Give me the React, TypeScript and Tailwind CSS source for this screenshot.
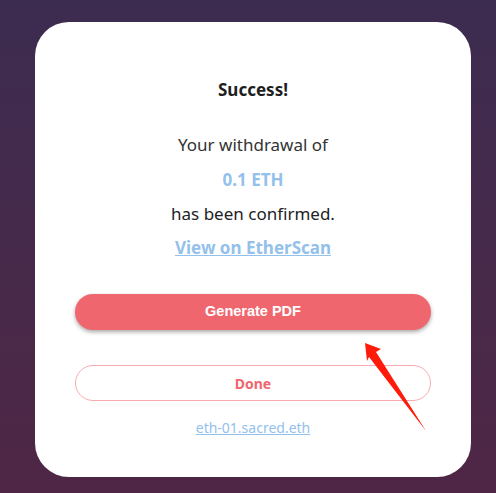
import React from "react";

const font = { fontFamily: '"Noto Sans", "Open Sans", sans-serif' };

export default function App() {
  return (
    <div
      className="relative w-[496px] h-[493px] overflow-hidden bg-gradient-to-b from-[#3c2c50] to-[#4f2645] pt-[22px] pl-[35px]"
      style={font}
    >
      <div className="w-[436px] h-[455px] bg-white rounded-[34px] flex flex-col items-center px-[40px] pt-[57px]">
        <h2 className="text-[17px] leading-[22px] font-bold text-[#1e1e1e]">Success!</h2>
        <p className="mt-[32px] text-[17px] leading-[24px] text-[#333]">Your withdrawal of</p>
        <p className="mt-[11px] text-[17px] leading-[24px] font-bold text-[#93c1ec]">0.1 ETH</p>
        <p className="mt-[10px] text-[17px] leading-[24px] text-[#222]">has been confirmed.</p>
        <a className="mt-[10px] text-[17px] leading-[24px] font-bold text-[#93c1ec] underline">
          View on EtherScan
        </a>
        <button
          className="mt-[34px] w-[356px] h-[36px] rounded-full bg-[#f0666e] text-white text-[14.5px] font-bold shadow-[0_2px_4px_rgba(0,0,0,0.35)]"
          style={{ fontFamily: '"Liberation Sans", Arial, sans-serif' }}
        >
          Generate PDF
        </button>
        <button className="mt-[35px] w-[356px] h-[36px] rounded-full border border-[#f8aab0] bg-white text-[#f0666e] text-[14px] font-bold">
          Done
        </button>
        <a className="mt-[17px] text-[14px] leading-[20px] text-[#93c1ec] underline">eth-01.sacred.eth</a>
      </div>
      <svg className="absolute left-0 top-0" width="496" height="493" viewBox="0 0 496 493">
        <polygon
          points="365,343 381,349 376,352 426,431 369,357 367,361"
          fill="#ff1a0a"
        />
      </svg>
    </div>
  );
}
